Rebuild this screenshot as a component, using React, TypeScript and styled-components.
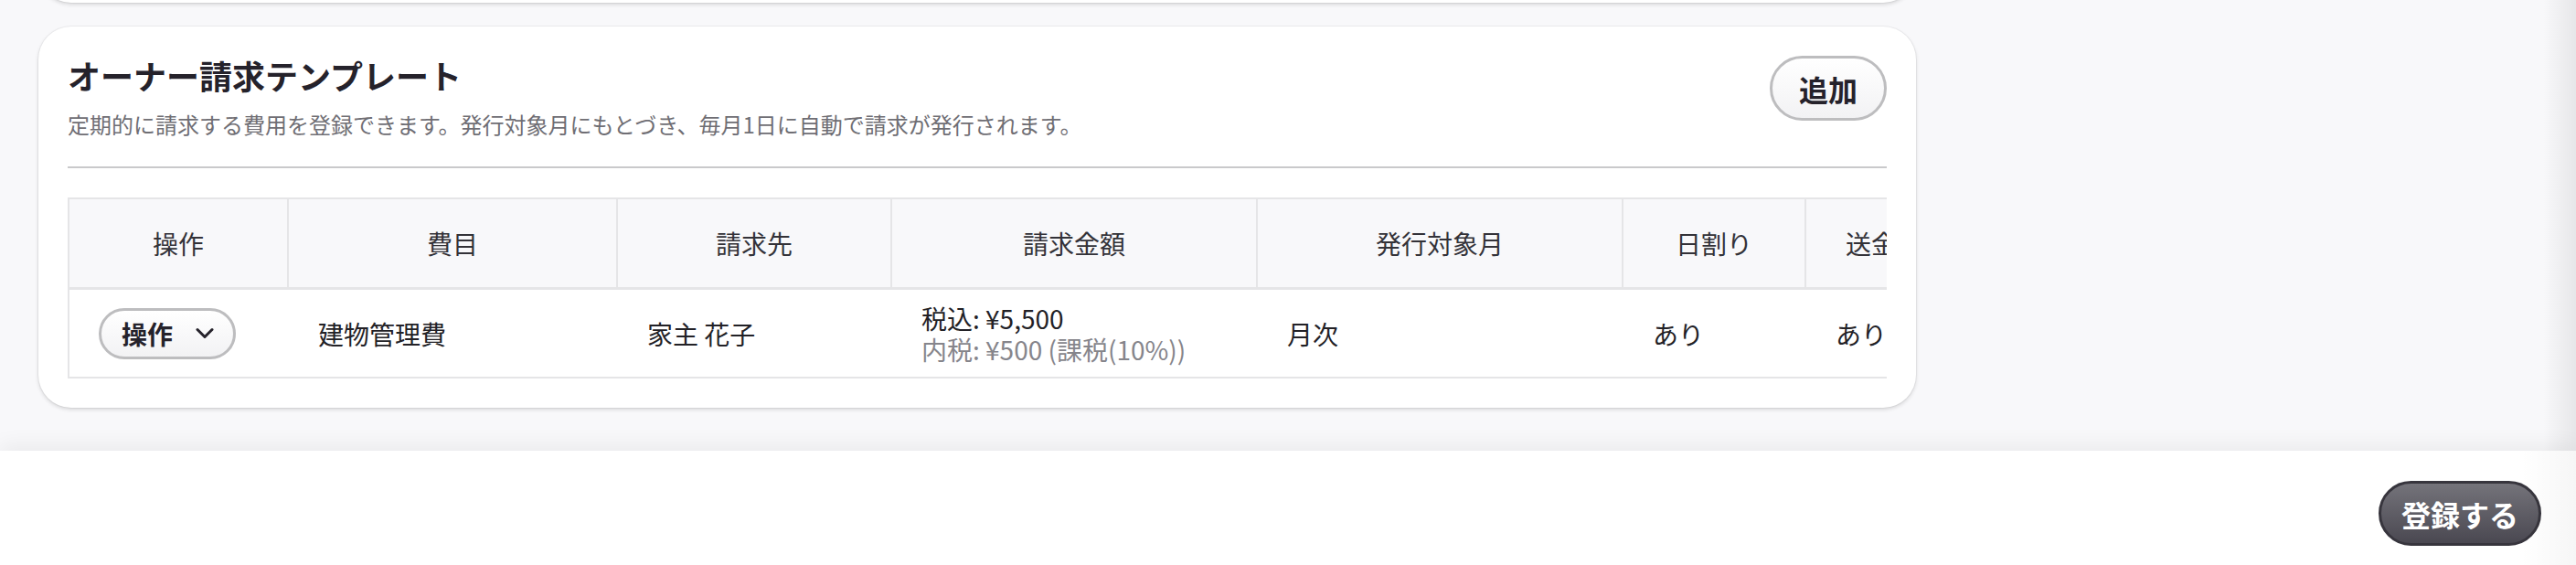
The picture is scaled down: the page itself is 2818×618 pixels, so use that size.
import { createGlobalStyle } from "styled-components";
import styled from "styled-components";

const GlobalStyle = createGlobalStyle`
    html, body {
        margin: 0;
        padding: 0;
        height: 100%;
    }
    body {
        font-family: "Noto Sans CJK JP", "Noto Sans", sans-serif;
        color: #222126;
        background: #ffffff;
    }
    #root {
        height: 100%;
    }
`;

const Page = styled.div`
    display: flex;
    flex-direction: column;
    height: 100vh;
    overflow: hidden;
`;

const Main = styled.main`
    position: relative;
    flex: 1;
    overflow: hidden;
    background: #f8f8fa;
    padding: 0 722px 0 42px;

    &::after {
        position: absolute;
        top: 0;
        right: 0;
        bottom: 0;
        width: 36px;
        background: linear-gradient(to right, rgba(0, 0, 0, 0), rgba(0, 0, 0, 0.07));
        content: "";
    }
`;

const Card = styled.section`
    background: #ffffff;
    border-radius: 36px;
    box-shadow: 0 2px 4px rgba(0, 0, 0, 0.14), 0 0 0 1px rgba(0, 0, 0, 0.04);
`;

const PrevCard = styled(Card)`
    height: 200px;
    margin-top: -197px;
`;

const TemplateCard = styled(Card)`
    margin-top: 26px;
    padding: 32px;
`;

const CardHeader = styled.div`
    display: flex;
    justify-content: space-between;
    align-items: flex-start;
`;

const Title = styled.h2`
    margin: 0;
    font-size: 36px;
    line-height: 43px;
    font-weight: 700;
    color: #25222b;
`;

const Description = styled.p`
    margin: 14px 0 0;
    font-size: 24px;
    line-height: 36px;
    color: #6f6e74;
`;

const PillButton = styled.button<{ $dark?: boolean; $size?: "md" | "lg" }>`
    display: inline-flex;
    align-items: center;
    gap: 25px;
    box-sizing: border-box;
    height: ${(p) => (p.$size === "md" ? "56px" : "71px")};
    padding: ${(p) => (p.$size === "md" ? "0 21px 0 22px" : p.$dark ? "0 22px" : "0 29px")};
    border: 3px solid ${(p) => (p.$dark ? "#37353d" : "#bdbdbf")};
    border-radius: 999px;
    background: ${(p) =>
        p.$dark
            ? "linear-gradient(#74737a, #4a4851)"
            : "linear-gradient(#ffffff, #f2f2f4)"};
    color: ${(p) => (p.$dark ? "#ffffff" : "#25222b")};
    font-family: inherit;
    font-size: ${(p) => (p.$size === "md" ? "28px" : "32px")};
    line-height: 1;
    font-weight: 700;
    white-space: nowrap;
    cursor: pointer;
`;

const Divider = styled.hr`
    margin: 28px 0 0;
    height: 2px;
    border: 0;
    background: #c9c9cb;
`;

const TableWrap = styled.div`
    margin-top: 32px;
    overflow: hidden;
    border: 2px solid #e5e5e7;
    border-right: 0;
`;

const COLUMNS = "240px 360px 300px 400px 400px 200px 200px 300px";

const HeaderRow = styled.div`
    display: grid;
    grid-template-columns: ${COLUMNS};
    width: max-content;
    height: 99px;
    box-sizing: border-box;
    border-bottom: 3px solid #e5e5e7;
    background: #f8f8fa;
`;

const HeaderCell = styled.div`
    display: flex;
    align-items: center;
    justify-content: center;
    border-right: 2px solid #e5e5e7;
    font-size: 28px;
    color: #333238;
    white-space: nowrap;
`;

const BodyRow = styled.div`
    display: grid;
    grid-template-columns: ${COLUMNS};
    width: max-content;
    height: 95px;
`;

const BodyCell = styled.div`
    display: flex;
    flex-direction: column;
    justify-content: center;
    padding-left: 32px;
    font-size: 28px;
    line-height: 34px;
    color: #222126;
    white-space: nowrap;
`;

const SubLine = styled.span`
    color: #86858b;
`;

const Footer = styled.footer`
    position: relative;
    z-index: 1;
    display: flex;
    justify-content: flex-end;
    align-items: flex-start;
    height: 125px;
    box-sizing: border-box;
    padding: 33px 38px 0 0;
    background: #ffffff;
    box-shadow: 0 -6px 22px rgba(0, 0, 0, 0.06);

    &::after {
        position: absolute;
        top: 0;
        right: 0;
        bottom: 0;
        width: 60px;
        background: linear-gradient(to right, rgba(0, 0, 0, 0), rgba(0, 0, 0, 0.035));
        content: "";
    }
`;

function Chevron() {
    return (
        <svg width="20" height="13" viewBox="0 0 20 13" fill="none">
            <path
                d="M2 2.5l8 8 8-8"
                stroke="#25222b"
                strokeWidth="3"
                strokeLinecap="round"
                strokeLinejoin="round"
            />
        </svg>
    );
}

const headers = ["操作", "費目", "請求先", "請求金額", "発行対象月", "日割り", "送金対象", "備考"];

export default function App() {
    return (
        <Page>
            <GlobalStyle />
            <Main>
                <PrevCard />
                <TemplateCard>
                    <CardHeader>
                        <div>
                            <Title>オーナー請求テンプレート</Title>
                            <Description>
                                定期的に請求する費用を登録できます。発行対象月にもとづき、毎月1日に自動で請求が発行されます。
                            </Description>
                        </div>
                        <PillButton>追加</PillButton>
                    </CardHeader>
                    <Divider />
                    <TableWrap>
                        <HeaderRow>
                            {headers.map((h) => (
                                <HeaderCell key={h}>{h}</HeaderCell>
                            ))}
                        </HeaderRow>
                        <BodyRow>
                            <BodyCell>
                                <div>
                                    <PillButton $size="md">
                                        操作
                                        <Chevron />
                                    </PillButton>
                                </div>
                            </BodyCell>
                            <BodyCell>建物管理費</BodyCell>
                            <BodyCell>家主 花子</BodyCell>
                            <BodyCell>
                                <span>税込: ¥5,500</span>
                                <SubLine>内税: ¥500 (課税(10%))</SubLine>
                            </BodyCell>
                            <BodyCell>月次</BodyCell>
                            <BodyCell>あり</BodyCell>
                            <BodyCell>あり</BodyCell>
                            <BodyCell>-</BodyCell>
                        </BodyRow>
                    </TableWrap>
                </TemplateCard>
            </Main>
            <Footer>
                <PillButton $dark>登録する</PillButton>
            </Footer>
        </Page>
    );
}
